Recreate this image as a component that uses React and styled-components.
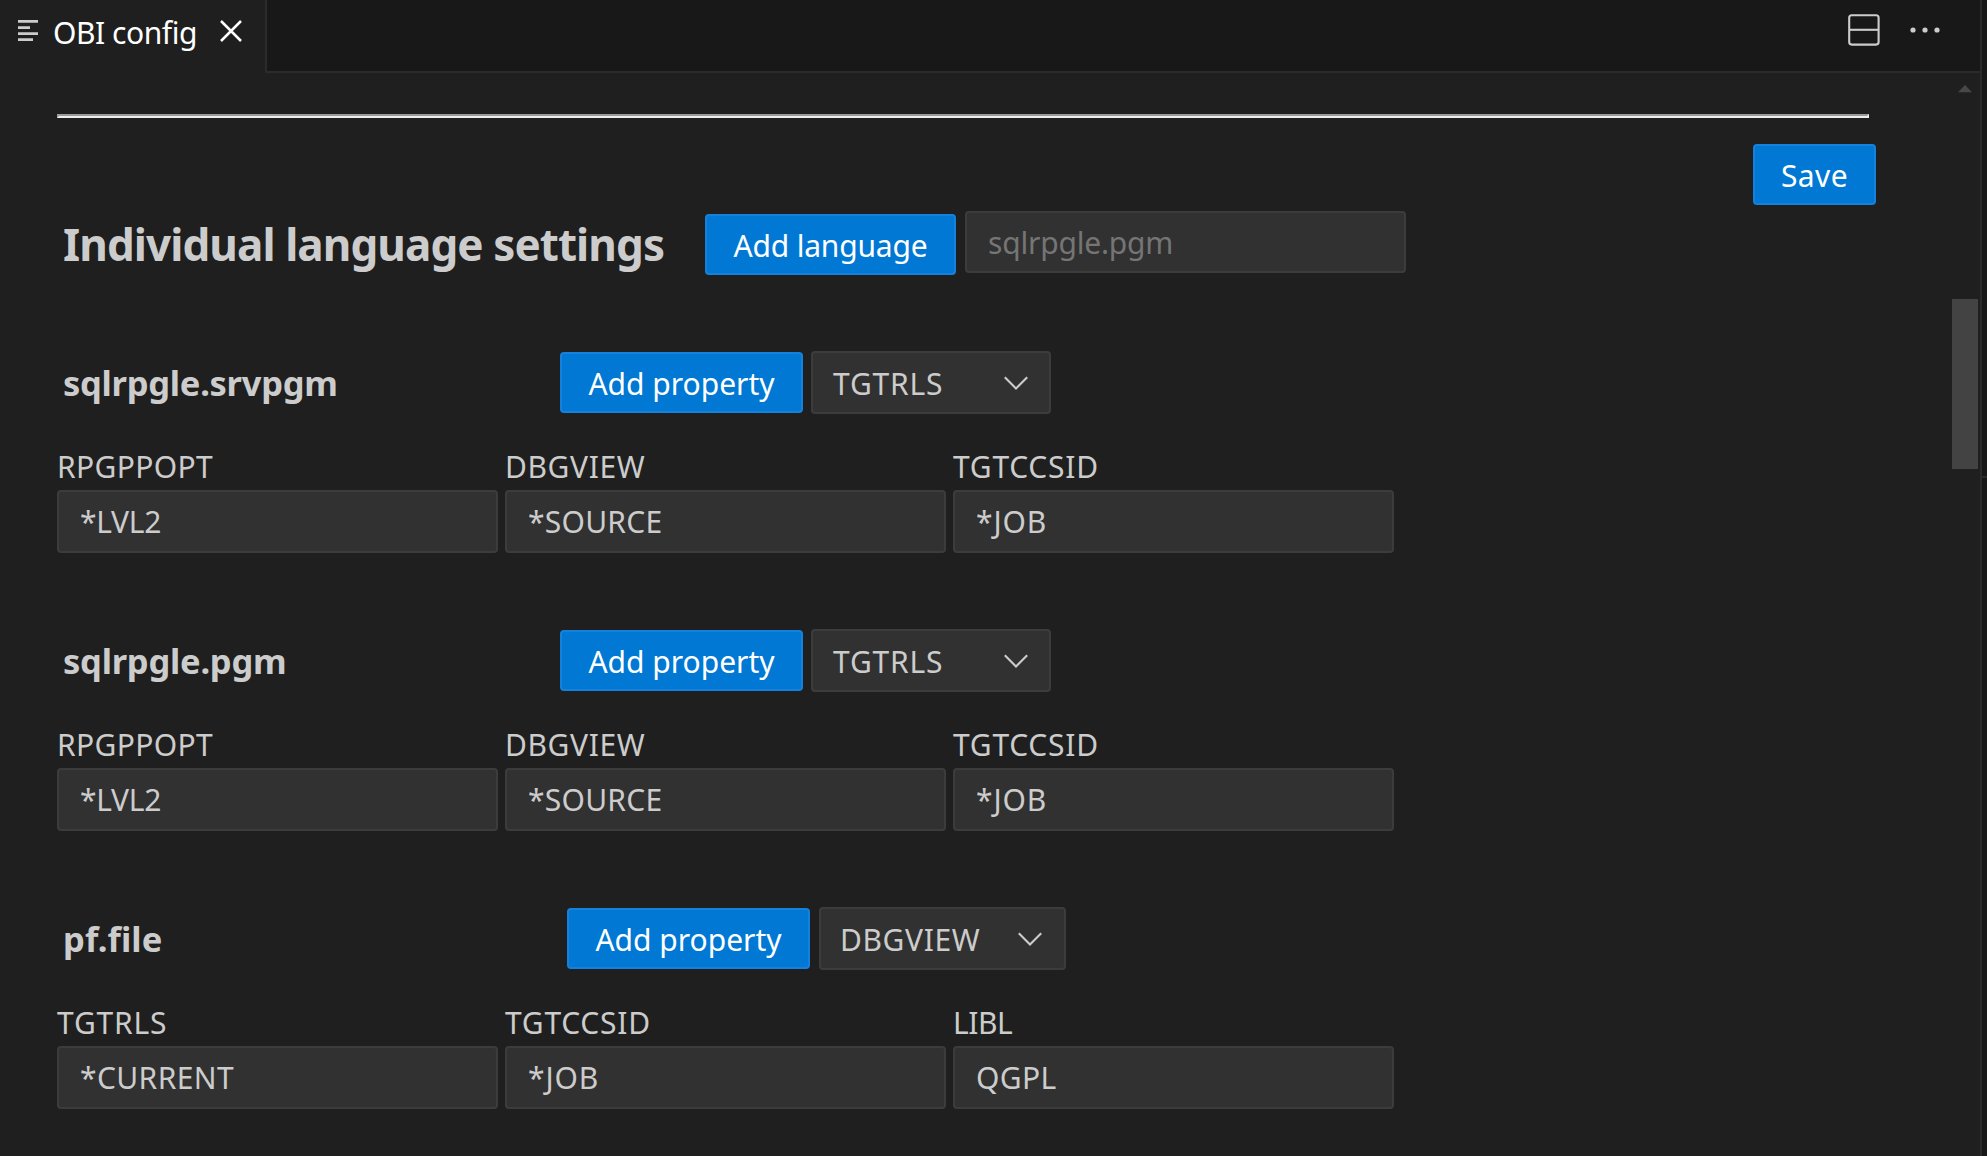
import React from "react";
import styled, { createGlobalStyle } from "styled-components";

const GlobalStyle = createGlobalStyle`
  *, *::before, *::after { box-sizing: border-box; }
  body {
    margin: 0;
    background: #181818;
    color: #cccccc;
    font-family: "Noto Sans", "Open Sans", sans-serif;
    font-size: 30px;
    overflow: hidden;
  }
`;

const Window = styled.div`
  display: flex;
  width: 100vw;
  height: 100vh;
`;

const Editor = styled.div`
  display: flex;
  flex-direction: column;
  flex: 1;
  min-width: 0;
  border-right: 2px solid #2b2b2b;
  background: #1f1f1f;
`;

const SidePanel = styled.aside`
  width: 5px;
  background: #181818;
`;

const SideHeader = styled.div`
  height: 478px;
  border-bottom: 2px solid #2b2b2b;
`;

const TabBar = styled.header`
  display: flex;
  height: 73px;
`;

const Tab = styled.div`
  display: flex;
  align-items: center;
  width: 267px;
  padding: 0 23px 11px 18px;
  border-right: 2px solid #2b2b2b;
  color: #ffffff;
`;

const TabTitle = styled.span`
  flex: 1;
  margin-left: 15px;
  padding-top: 3px;
  letter-spacing: -0.45px;
  white-space: nowrap;
`;

const Actions = styled.div`
  display: flex;
  flex: 1;
  justify-content: flex-end;
  align-items: center;
  gap: 30px;
  padding: 0 40px 11px 0;
  border-bottom: 2px solid #2b2b2b;
  background: #181818;
`;

const Body = styled.div`
  display: flex;
  flex: 1;
  min-height: 0;
`;

const Content = styled.main`
  flex: 1;
  padding: 41px 76px 0 57px;
`;

const Divider = styled.hr`
  height: 4px;
  margin: 0 7px 26px 0;
  border: 2px solid;
  border-color: #9a9a9a #eeeeee #eeeeee #9a9a9a;
`;

const Scrollbar = styled.div`
  display: flex;
  flex-direction: column;
  align-items: center;
  width: 28px;
  padding: 12px 2px 0 0;
`;

const ScrollThumb = styled.div`
  width: 26px;
  height: 170px;
  margin-top: 206px;
  background: #434343;
`;

const SaveRow = styled.div`
  display: flex;
  justify-content: flex-end;
  margin-bottom: 6px;
`;

const Button = styled.button`
  width: ${(p) => p.$width}px;
  height: 61px;
  padding: 1px 0 0;
  border: 2px solid #1482dc;
  border-radius: 4px;
  background: #0078d4;
  color: #ffffff;
  font: inherit;
  line-height: 57px;
  letter-spacing: ${(p) => p.$track || 0}px;
  white-space: nowrap;
`;

const TitleRow = styled.div`
  display: flex;
  align-items: flex-end;
  height: 64px;
  margin-bottom: 76px;
`;

const Title = styled.h1`
  width: 648px;
  margin: 0;
  padding-left: 6px;
  font-size: 44px;
  font-weight: 700;
  line-height: 61px;
  letter-spacing: -0.92px;
  white-space: nowrap;
`;

const Input = styled.input`
  width: 441px;
  height: 63px;
  padding: 0 21px;
  border: 2px solid #3c3c3c;
  border-radius: 4px;
  outline: none;
  background: #313131;
  color: #cccccc;
  font: inherit;
  letter-spacing: ${(p) => p.$track || 0}px;
  &::placeholder { color: #757575; opacity: 1; }
`;

const NewLanguage = styled(Input)`
  align-self: flex-start;
  height: 62px;
  margin-left: 9px;
  padding-top: 1px;
`;

const Section = styled.section`
  margin-bottom: 76px;
`;

const SectionHeader = styled.div`
  display: flex;
  align-items: center;
  height: 63px;
  margin-bottom: 32px;
`;

const SectionName = styled.h2`
  width: ${(p) => (p.$wide ? 510 : 503)}px;
  margin: 0;
  padding-left: 6px;
  font-size: 34.5px;
  font-weight: 700;
  letter-spacing: ${(p) => p.$track}px;
`;

const Select = styled.div`
  display: flex;
  align-items: center;
  justify-content: space-between;
  width: ${(p) => (p.$wide ? 247 : 240)}px;
  height: 63px;
  margin-left: ${(p) => (p.$wide ? 9 : 8)}px;
  padding: 1px ${(p) => (p.$wide ? 22 : 21)}px 0 ${(p) => (p.$wide ? 19 : 20)}px;
  border: 2px solid #3c3c3c;
  border-radius: 4px;
  background: #313131;
  letter-spacing: ${(p) => p.$track}px;
`;

const Fields = styled.div`
  display: flex;
  gap: 7px;
`;

const Field = styled.label`
  display: flex;
  flex-direction: column;
  gap: 3px;
`;

const FieldName = styled.span`
  line-height: 41px;
  letter-spacing: ${(p) => p.$track}px;
`;

const ListIcon = () => (
  <svg width="20" height="22" viewBox="0 0 20 22" fill="#cccccc">
    <path d="M0 0h20v2.8H0zM0 6.2h12V9H0zM0 12.2h20V15H0zM0 18.2h15V21H0z" />
  </svg>
);

const CloseIcon = () => (
  <svg width="22" height="22" viewBox="0 0 22 22" fill="none" stroke="#ffffff" strokeWidth="2.5">
    <path d="M1 1l20 20M21 1L1 21" />
  </svg>
);

const SplitIcon = () => (
  <svg width="32" height="32" viewBox="0 0 32 32" fill="none" stroke="#cccccc" strokeWidth="2.1">
    <rect x="1.2" y="1.2" width="29.4" height="29.4" rx="2.5" />
    <path d="M1 15.8h30" />
  </svg>
);

const MoreIcon = () => (
  <svg width="30" height="6" viewBox="0 0 30 6" fill="#cccccc">
    <circle cx="3" cy="3" r="2.6" />
    <circle cx="15" cy="3" r="2.6" />
    <circle cx="27" cy="3" r="2.6" />
  </svg>
);

const ChevronIcon = () => (
  <svg width="24" height="14" viewBox="0 0 24 14" fill="none" stroke="#cccccc" strokeWidth="2.1">
    <path d="M0.8 1.2L12 12.4L23.2 1.2" />
  </svg>
);

const ScrollUpIcon = () => (
  <svg width="14" height="8" viewBox="0 0 14 8" fill="#484848">
    <path d="M7 0l7 7.3H0z" />
  </svg>
);

const TRACKING = {
  RPGPPOPT: 0.36,
  DBGVIEW: 0.6,
  TGTCCSID: 0.75,
  TGTRLS: 0.8,
  LIBL: -0.5,
  "*LVL2": -0.3,
  "*CURRENT": 0.4,
  "*SOURCE": 0.25,
  "*JOB": 0.9,
  QGPL: 0.4,
};

const RPG_FIELDS = [
  ["RPGPPOPT", "*LVL2"],
  ["DBGVIEW", "*SOURCE"],
  ["TGTCCSID", "*JOB"],
];

const LANGUAGES = [
  { name: "sqlrpgle.srvpgm", property: "TGTRLS", fields: RPG_FIELDS, track: -0.27 },
  { name: "sqlrpgle.pgm", property: "TGTRLS", fields: RPG_FIELDS, track: -0.24 },
  {
    name: "pf.file",
    property: "DBGVIEW",
    wide: true,
    track: 0.1,
    fields: [
      ["TGTRLS", "*CURRENT"],
      ["TGTCCSID", "*JOB"],
      ["LIBL", "QGPL"],
    ],
  },
];

export default function App() {
  return (
    <Window>
      <GlobalStyle />
      <Editor>
        <TabBar>
          <Tab>
            <ListIcon />
            <TabTitle>OBI config</TabTitle>
            <CloseIcon />
          </Tab>
          <Actions>
            <SplitIcon />
            <MoreIcon />
          </Actions>
        </TabBar>
        <Body>
          <Content>
            <Divider />
            <SaveRow>
              <Button $width={123} $track={0.4}>Save</Button>
            </SaveRow>
            <TitleRow>
              <Title>Individual language settings</Title>
              <Button $width={251} $track={-0.2}>Add language</Button>
              <NewLanguage placeholder="sqlrpgle.pgm" $track={-0.2} />
            </TitleRow>
            {LANGUAGES.map((lang) => (
              <Section key={lang.name}>
                <SectionHeader>
                  <SectionName $wide={lang.wide} $track={lang.track}>{lang.name}</SectionName>
                  <Button $width={243}>Add property</Button>
                  <Select $wide={lang.wide} $track={TRACKING[lang.property]}>
                    {lang.property}
                    <ChevronIcon />
                  </Select>
                </SectionHeader>
                <Fields>
                  {lang.fields.map(([name, value]) => (
                    <Field key={name}>
                      <FieldName $track={TRACKING[name]}>{name}</FieldName>
                      <Input readOnly value={value} $track={TRACKING[value]} />
                    </Field>
                  ))}
                </Fields>
              </Section>
            ))}
          </Content>
          <Scrollbar>
            <ScrollUpIcon />
            <ScrollThumb />
          </Scrollbar>
        </Body>
      </Editor>
      <SidePanel>
        <SideHeader />
      </SidePanel>
    </Window>
  );
}
